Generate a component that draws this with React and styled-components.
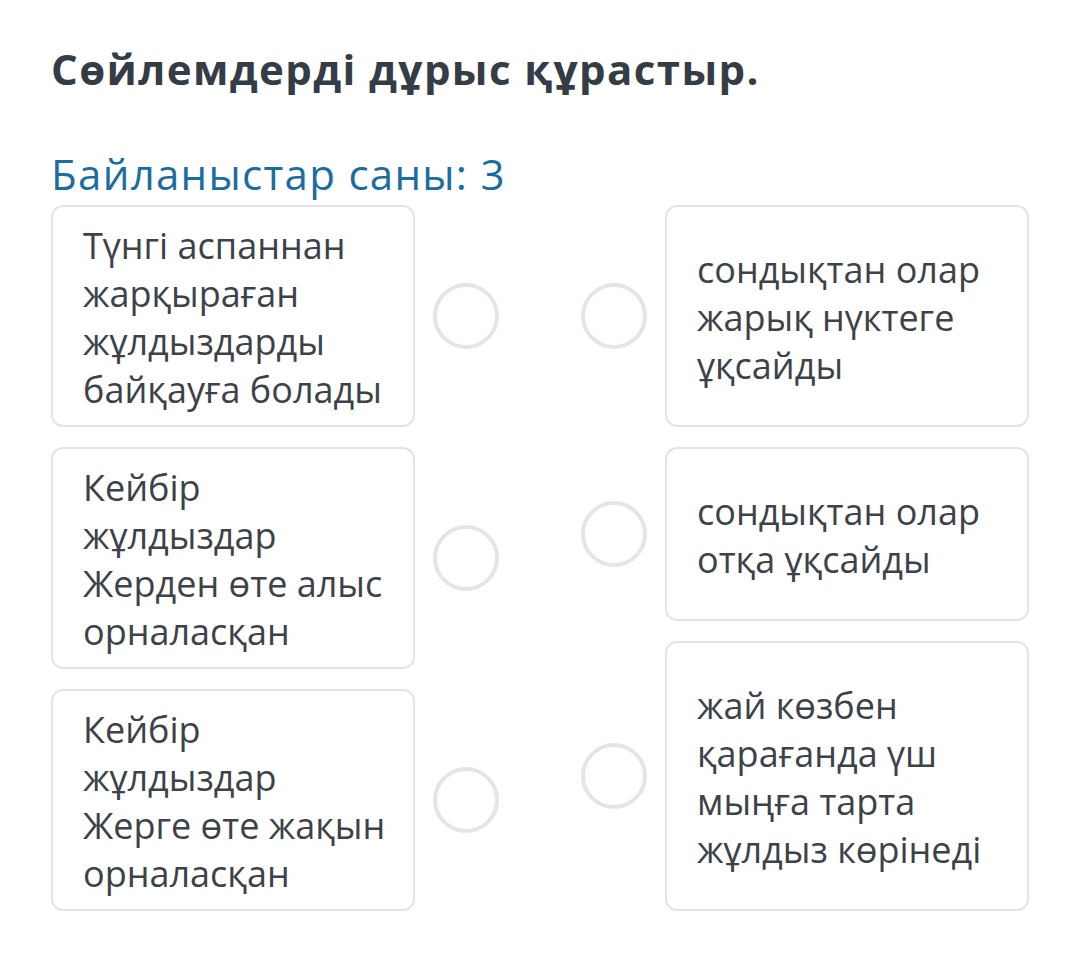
import React from 'react'
import styled, { createGlobalStyle } from 'styled-components'

const left = [
  'Түнгі аспаннан\nжарқыраған\nжұлдыздарды\nбайқауға болады',
  'Кейбір\nжұлдыздар\nЖерден өте алыс\nорналасқан',
  'Кейбір\nжұлдыздар\nЖерге өте жақын\nорналасқан',
]

const right = [
  { text: 'сондықтан олар\nжарық нүктеге\nұқсайды', h: 222 },
  { text: 'сондықтан олар\nотқа ұқсайды', h: 174 },
  { text: 'жай көзбен\nқарағанда үш\nмыңға тарта\nжұлдыз көрінеді', h: 270 },
]

function App() {
  return (
    <>
      <GlobalStyle />
      <Page>
        <Title>Сөйлемдерді дұрыс құрастыр.</Title>
        <Count>Байланыстар саны: 3</Count>
        <Board>
          <Column>
            {left.map((t) => (
              <Item key={t}>
                <Card style={{ height: 222 }}>{t}</Card>
                <Dot />
              </Item>
            ))}
          </Column>
          <Column>
            {right.map((r) => (
              <Item key={r.text}>
                <Dot />
                <Card style={{ height: r.h }}>{r.text}</Card>
              </Item>
            ))}
          </Column>
        </Board>
      </Page>
    </>
  )
}

export default App

const GlobalStyle = createGlobalStyle`
  body {
    margin: 0;
    background: #fff;
    font-family: "Open Sans", "Noto Sans", sans-serif;
  }
`

const Page = styled.div`
  width: 1080px;
  height: 963px;
  box-sizing: border-box;
  padding: 40px 50px 0 51px;
`

const Title = styled.h1`
  margin: 0;
  font-size: 42px;
  line-height: 57px;
  letter-spacing: 1.4px;
  font-weight: 700;
  color: #343c46;
`

const Count = styled.div`
  margin: 48px 0 3px;
  font-size: 42px;
  line-height: 57px;
  letter-spacing: 1.3px;
  color: #1b6d9f;
`

const Board = styled.div`
  display: grid;
  grid-template-columns: 448px 449px;
  column-gap: 82px;
  align-items: start;
`

const Column = styled.div`
  display: flex;
  flex-direction: column;
  gap: 20px;
`

const Item = styled.div`
  display: flex;
  align-items: center;
  gap: 18px;
`

const Card = styled.div`
  flex: 0 0 364px;
  box-sizing: border-box;
  padding: 4px 16px 0 30px;
  border: 2px solid #e2e4e7;
  border-radius: 12px;
  display: flex;
  align-items: center;
  white-space: pre-line;
  font-size: 36px;
  line-height: 48px;
  color: #3d4249;
`

const Dot = styled.span`
  flex: 0 0 66px;
  height: 66px;
  box-sizing: border-box;
  border: 4px solid #e3e5e8;
  border-radius: 50%;
`
